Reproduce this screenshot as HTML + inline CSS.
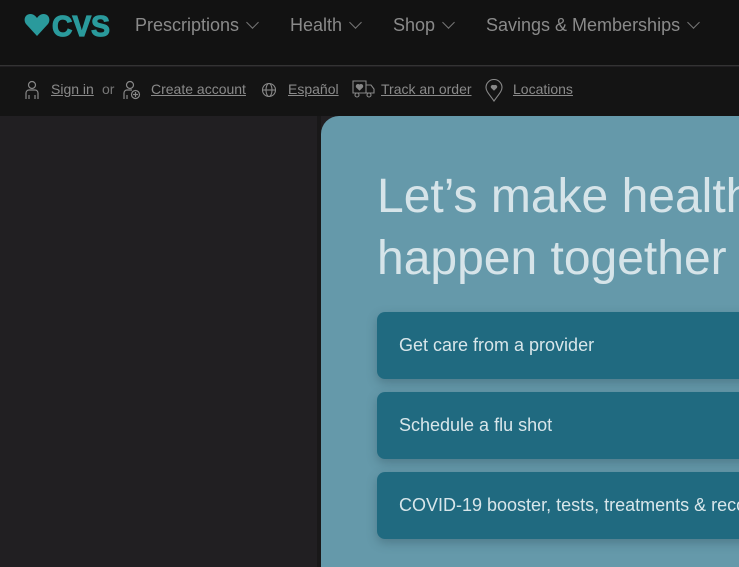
<!DOCTYPE html>
<html style="overflow:hidden"><head><style>
*{margin:0;padding:0;box-sizing:border-box}
html,body{width:739px;height:567px;overflow:hidden}
body{background:#211f22;font-family:"Liberation Sans",sans-serif;position:relative}
.top{position:absolute;left:0;top:0;width:739px;height:66px;background:#121212;border-bottom:1px solid #333}
.nav{position:absolute;top:15px;font-size:18px;color:#8a8a8a}
.nav .ch{display:inline-block;width:9px;height:9px;border-right:1.5px solid #777;border-bottom:1.5px solid #777;transform:rotate(45deg);margin-left:9px;position:relative;top:-4px}
.sub{position:absolute;left:0;top:67px;width:739px;height:49px;background:#141414}
.sub a{position:absolute;top:14px;font-size:14px;color:#8a8a8a;text-decoration:underline}
.sub span{position:absolute;top:14px;font-size:14px;color:#777}
.strip{position:absolute;left:317px;top:116px;width:4px;height:451px;background:#191819}
.panel{position:absolute;left:321px;top:116px;width:418px;height:451px;background:#6599aa;border-top-left-radius:18px;overflow:hidden}
h1{position:absolute;left:56px;top:50px;font-weight:normal;font-size:48px;line-height:62px;color:#d6e4e9;white-space:nowrap}
.btn{position:absolute;left:56px;width:380px;height:67px;background:#206a80;border-radius:8px;box-shadow:0 4px 10px rgba(40,70,80,.35);color:#d8e6ea;font-size:18px;padding:23px 0 0 22px;white-space:nowrap}
svg{position:absolute}
</style></head><body>
<div class="top">
<svg style="left:24px;top:13px" width="90" height="26" viewBox="0 0 90 26">
<path d="M13 23 L2 11 C-1 7 1 1 6.5 1 C9.5 1 11.5 3 13 5 C14.5 3 16.5 1 19.5 1 C25 1 27 7 24 11 Z" fill="#2a9a9c"/>
<text x="28" y="23" font-family="Liberation Sans" font-weight="bold" font-size="29" fill="#2a9a9c" stroke="#2a9a9c" stroke-width="1.2" textLength="58" lengthAdjust="spacingAndGlyphs">CVS</text>
</svg>
<div class="nav" style="left:135px">Prescriptions<span class="ch"></span></div>
<div class="nav" style="left:290px">Health<span class="ch"></span></div>
<div class="nav" style="left:393px">Shop<span class="ch"></span></div>
<div class="nav" style="left:486px">Savings &amp; Memberships<span class="ch"></span></div>
</div>
<div class="sub">
<svg style="left:24px;top:13px" width="16" height="20" viewBox="0 0 16 20" fill="none" stroke="#888" stroke-width="1.2"><circle cx="8" cy="5" r="3.5"/><path d="M2 19V13a3 3 0 0 1 3-3h6a3 3 0 0 1 3 3v6M5 15v4M11 15v4"/></svg>
<a style="left:51px">Sign in</a><span style="left:102px">or</span>
<svg style="left:123px;top:13px" width="18" height="20" viewBox="0 0 18 20" fill="none" stroke="#888" stroke-width="1.2"><circle cx="7" cy="5" r="3.5"/><path d="M1 19V13a3 3 0 0 1 3-3h5M4 15v4"/><circle cx="12.5" cy="14.5" r="4"/><path d="M12.5 12v5M10 14.5h5"/></svg>
<a style="left:151px">Create account</a>
<svg style="left:261px;top:15px" width="16" height="16" viewBox="0 0 16 16" fill="none" stroke="#888" stroke-width="1.1"><circle cx="8" cy="8" r="6.5"/><ellipse cx="8" cy="8" rx="3" ry="6.5"/><path d="M1.5 8h13"/></svg>
<a style="left:288px">Español</a>
<svg style="left:352px;top:13px" width="23" height="18" viewBox="0 0 23 18" fill="none" stroke="#888" stroke-width="1.1"><path d="M1 1h13v12H1zM14 5h5l3 4v4h-8"/><circle cx="5" cy="15" r="2"/><circle cx="17" cy="15" r="2"/><path d="M7.5 10L4.5 7a1.6 1.6 0 0 1 3-1.5 1.6 1.6 0 0 1 3 1.5z" fill="#888"/></svg>
<a style="left:381px">Track an order</a>
<svg style="left:485px;top:12px" width="18" height="24" viewBox="0 0 18 24" fill="none" stroke="#888" stroke-width="1.1"><path d="M9 22C4 15 1 12 1 8.5a8 8 0 0 1 16 0C17 12 14 15 9 22z"/><path d="M9 11L6.5 8.5a1.3 1.3 0 0 1 2.5-1.2 1.3 1.3 0 0 1 2.5 1.2z" fill="#888"/></svg>
<a style="left:513px">Locations</a>
</div>
<div class="strip"></div>
<div class="panel">
<h1>Let’s make health<br>happen together</h1>
<div class="btn" style="top:196px">Get care from a provider</div>
<div class="btn" style="top:276px">Schedule a flu shot</div>
<div class="btn" style="top:356px">COVID-19 booster, tests, treatments &amp; recovery</div>
</div>
</body></html>
